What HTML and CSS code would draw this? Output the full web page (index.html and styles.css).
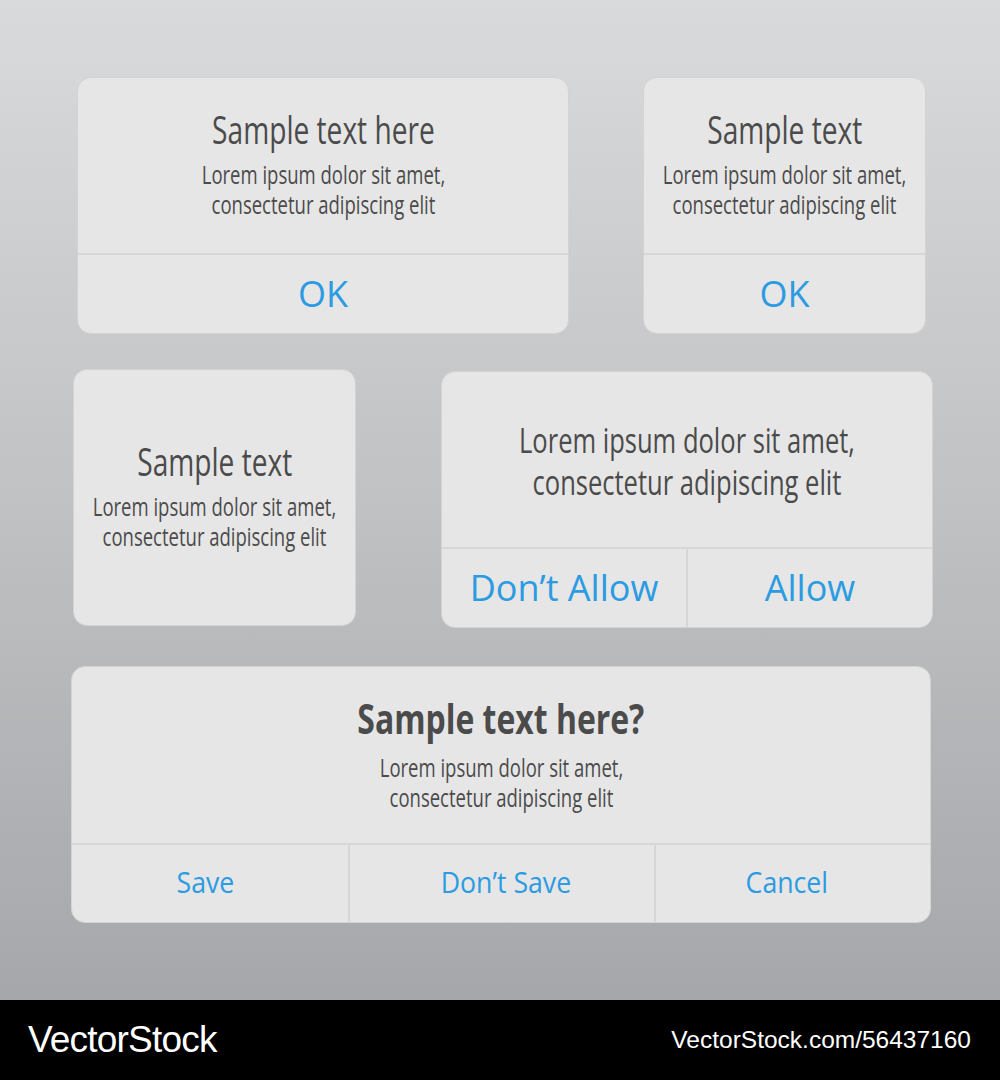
FILE: index.html
```html
<!DOCTYPE html>
<html lang="en">
<head>
    <meta charset="UTF-8">
    <meta name="viewport" content="width=device-width, initial-scale=1.0">
    <title>Alert Dialogs</title>
    <link rel="stylesheet" href="styles.css">
</head>
<body>
    <div class="board">
        <div class="row row-top">
            <div class="alert alert-wide">
                <div class="alert-body">
                    <h2 class="alert-title"><span class="squeeze">Sample text here</span></h2>
                    <p class="alert-text"><span class="squeeze">Lorem ipsum dolor sit amet,<br>consectetur adipiscing elit</span></p>
                </div>
                <div class="alert-actions">
                    <button class="action">OK</button>
                </div>
            </div>

            <div class="alert alert-small">
                <div class="alert-body">
                    <h2 class="alert-title"><span class="squeeze">Sample text</span></h2>
                    <p class="alert-text"><span class="squeeze">Lorem ipsum dolor sit amet,<br>consectetur adipiscing elit</span></p>
                </div>
                <div class="alert-actions">
                    <button class="action">OK</button>
                </div>
            </div>
        </div>

        <div class="row row-mid">
            <div class="alert alert-small alert-plain">
                <div class="alert-body">
                    <h2 class="alert-title"><span class="squeeze">Sample text</span></h2>
                    <p class="alert-text"><span class="squeeze">Lorem ipsum dolor sit amet,<br>consectetur adipiscing elit</span></p>
                </div>
            </div>

            <div class="alert alert-wide alert-permission">
                <div class="alert-body">
                    <p class="alert-text alert-text-large"><span class="squeeze">Lorem ipsum dolor sit amet,<br>consectetur adipiscing elit</span></p>
                </div>
                <div class="alert-actions">
                    <button class="action">Don’t Allow</button>
                    <button class="action">Allow</button>
                </div>
            </div>
        </div>

        <div class="row row-bottom">
            <div class="alert alert-full">
                <div class="alert-body">
                    <h2 class="alert-title alert-title-bold"><span class="squeeze">Sample text here?</span></h2>
                    <p class="alert-text"><span class="squeeze">Lorem ipsum dolor sit amet,<br>consectetur adipiscing elit</span></p>
                </div>
                <div class="alert-actions actions-three">
                    <button class="action action-narrow action-save"><span class="squeeze">Save</span></button>
                    <button class="action action-narrow action-discard"><span class="squeeze">Don’t Save</span></button>
                    <button class="action action-narrow action-cancel"><span class="squeeze">Cancel</span></button>
                </div>
            </div>
        </div>
    </div>

    <div class="footer">
        <span class="brand">VectorStock</span>
        <span class="stock-id">VectorStock.com/56437160</span>
    </div>
</body>
</html>
```

FILE: styles.css
```css
* {
    box-sizing: border-box;
}
body {
    margin: 0;
    padding: 0;
    font-family: "Open Sans", "Noto Sans", sans-serif;
    color: #4b4b4b;
    background-color: #000;
}
.board {
    height: 1000px;
    padding-top: 77px;
    background: linear-gradient(to bottom, #d9dadc 0%, #c3c4c6 45%, #a6a7aa 100%);
}
.row {
    display: flex;
    justify-content: space-between;
    align-items: flex-start;
}
.row-top {
    padding: 0 74px 0 77px;
}
.row-mid {
    margin-top: 35px;
    padding: 0 67px 0 73px;
}
.row-bottom {
    margin-top: 38px;
    padding: 0 69px 0 71px;
}

/* no condensed face is installed, so the narrow text is squeezed */
.squeeze {
    display: inline-block;
    white-space: nowrap;
    transform: scaleX(0.74);
}

/* dialog card */
.alert {
    display: flex;
    flex-direction: column;
    height: 257px;
    background-color: #e6e6e6;
    border: 1px solid #d3d3d4;
    border-radius: 14px;
    overflow: hidden;
}
.alert-wide {
    width: 492px;
}
.alert-small {
    width: 283px;
}
.alert-full {
    width: 860px;
}
.alert-permission {
    margin-top: 2px;
}
.alert-body {
    height: 175px;
    padding-bottom: 6px;
    display: flex;
    flex-direction: column;
    justify-content: center;
    align-items: center;
    text-align: center;
}
.alert-plain .alert-body {
    height: 100%;
}
.alert-full .alert-body {
    height: 176px;
    padding-bottom: 2px;
}
.alert-title {
    margin: 0 0 8px;
    font-size: 38px;
    font-weight: normal;
    line-height: 44px;
}
.alert-title-bold {
    font-size: 42px;
    font-weight: bold;
    margin-bottom: 12px;
}
.alert-title-bold .squeeze {
    transform: scaleX(0.76);
}
.alert-text {
    margin: 0;
    font-size: 25px;
    line-height: 30px;
}
.alert-text-large {
    font-size: 34.5px;
    line-height: 42px;
    margin-top: 8px;
}

/* button row */
.alert-actions {
    flex: 1;
    display: flex;
    border-top: 2px solid #d7d7d8;
}
.action {
    flex: 1;
    background: none;
    border: none;
    padding: 0 0 2px;
    font-family: "Open Sans", "Noto Sans", sans-serif;
    font-size: 36px;
    color: #2b9be2;
    cursor: pointer;
}
.action + .action {
    border-left: 2px solid #d7d7d8;
}
.actions-three .action-save,
.actions-three .action-cancel {
    flex: 0 0 276px;
}
.action-narrow {
    font-size: 29px;
    padding-bottom: 4px;
}
.action-narrow .squeeze {
    transform: scaleX(0.92);
}
.action-save {
    padding-right: 10px;
}
.action-discard {
    padding-left: 8px;
}
.action-cancel {
    padding-right: 12px;
}

/* watermark strip */
.footer {
    height: 80px;
    display: flex;
    justify-content: space-between;
    align-items: center;
    padding: 0 29px 0 28px;
    background-color: #000;
    color: #fff;
    font-family: "Liberation Sans", Arial, sans-serif;
}
.brand {
    font-size: 37px;
    letter-spacing: -0.8px;
}
.stock-id {
    font-size: 24.5px;
}
```
